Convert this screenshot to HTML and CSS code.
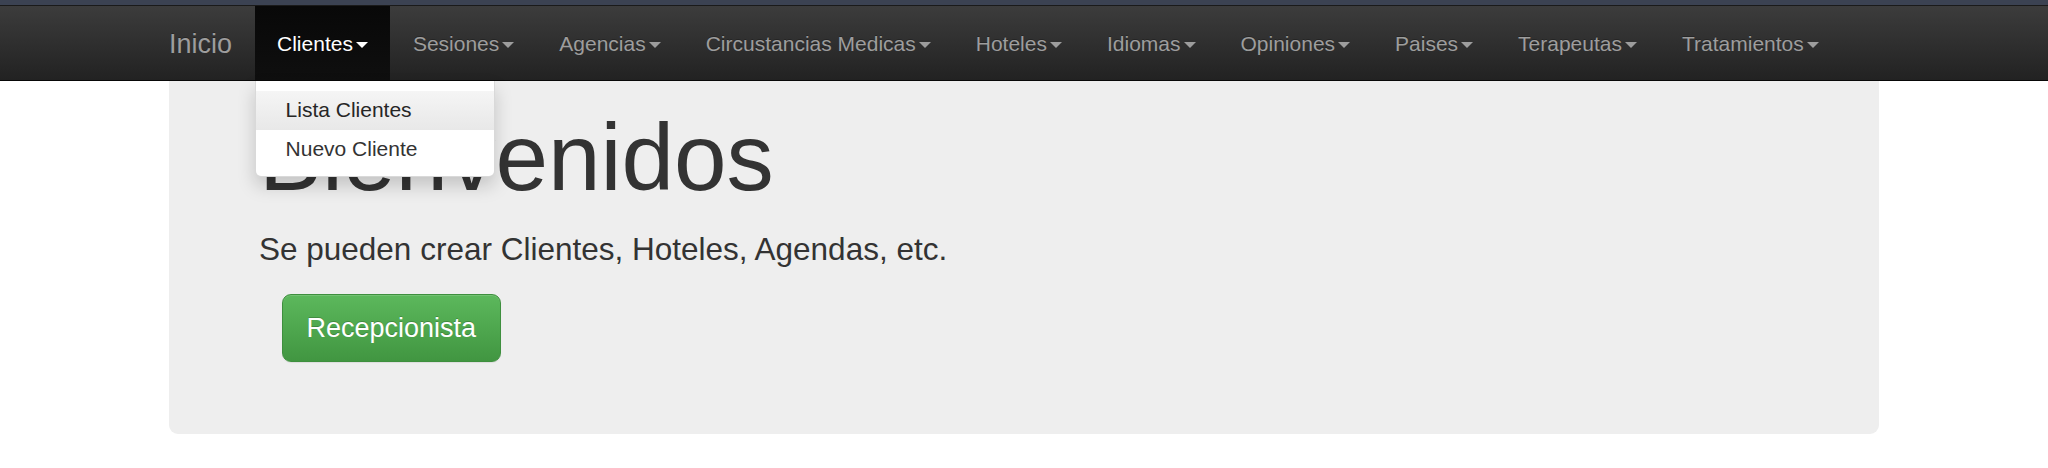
FILE: index.html
```html
<!DOCTYPE html>
<html lang="es">
<head>
<meta charset="utf-8">
<title>Inicio</title>
<link rel="stylesheet" href="styles.css">
</head>
<body>
<div class="topstrip"></div>
<nav class="navbar">
  <div class="nav-container">
    <a class="brand" href="#">Inicio</a>
    <ul class="nav">
      <li class="nav-item active">
        <a href="#">Clientes<span class="caret"></span></a>
        <ul class="dropdown">
          <li class="dd-item hover"><a href="#">Lista Clientes</a></li>
          <li class="dd-item"><a href="#">Nuevo Cliente</a></li>
        </ul>
      </li>
      <li class="nav-item"><a href="#">Sesiones<span class="caret"></span></a></li>
      <li class="nav-item"><a href="#">Agencias<span class="caret"></span></a></li>
      <li class="nav-item"><a href="#">Circustancias Medicas<span class="caret"></span></a></li>
      <li class="nav-item"><a href="#">Hoteles<span class="caret"></span></a></li>
      <li class="nav-item"><a href="#">Idiomas<span class="caret"></span></a></li>
      <li class="nav-item"><a href="#">Opiniones<span class="caret"></span></a></li>
      <li class="nav-item"><a href="#">Paises<span class="caret"></span></a></li>
      <li class="nav-item"><a href="#">Terapeutas<span class="caret"></span></a></li>
      <li class="nav-item"><a href="#">Tratamientos<span class="caret"></span></a></li>
    </ul>
  </div>
</nav>
<main class="container">
  <section class="jumbotron">
    <h1 class="title">Bienvenidos</h1>
    <p class="lead">Se pueden crear Clientes, Hoteles, Agendas, etc.</p>
    <a class="btn-success" href="#">Recepcionista</a>
  </section>
</main>
</body>
</html>
```
FILE: styles.css
```css
* { box-sizing: border-box; }
html, body {
  margin: 0;
  padding: 0;
  background: #fff;
  font-family: "Liberation Sans", Arial, sans-serif;
  color: #333;
}
a { text-decoration: none; }

.topstrip {
  height: 5px;
  background: #3b4252;
}

.navbar {
  height: 76px;
  border-top: 1px solid #1a1a1a;
  border-bottom: 1px solid #080808;
  background: linear-gradient(to bottom, #3c3c3c 0, #222 100%);
}
.nav-container {
  width: 1755px;
  margin: 0 auto;
  padding: 0 22.5px;
  display: flex;
  height: 74px;
}
.brand {
  margin-left: -22.5px;
  padding: 2px 22.5px 0;
  font-size: 27px;
  line-height: 72px;
  color: #9d9d9d;
  text-shadow: 0 -1px 0 rgba(0,0,0,.25);
}
.nav {
  list-style: none;
  margin: 0;
  padding: 0;
  display: flex;
}
.nav-item {
  position: relative;
}
.nav-item > a {
  display: block;
  height: 74px;
  padding: 2px 22.5px 0;
  font-size: 21px;
  line-height: 72px;
  color: #9d9d9d;
  text-shadow: 0 -1px 0 rgba(0,0,0,.25);
}
.nav-item.active > a {
  color: #fff;
  background: linear-gradient(to bottom, #080808 0, #0f0f0f 100%);
}
.caret {
  display: inline-block;
  width: 0;
  height: 0;
  margin-left: 3px;
  vertical-align: middle;
  border-top: 6px solid;
  border-left: 6px solid transparent;
  border-right: 6px solid transparent;
}

.dropdown {
  position: absolute;
  top: 75px;
  left: 0;
  z-index: 10;
  width: 240px;
  list-style: none;
  margin: 0;
  padding: 9.5px 0 7px;
  background: #fff;
  border: 1px solid rgba(0,0,0,.15);
  border-top: 0;
  border-radius: 0 0 6px 6px;
  box-shadow: 0 9px 18px rgba(0,0,0,.175);
}
.dd-item > a {
  display: block;
  padding: 4.5px 30px;
  font-size: 21px;
  line-height: 30px;
  color: #333;
}
.dd-item.hover > a {
  color: #262626;
  background: linear-gradient(to bottom, #f5f5f5 0, #e8e8e8 100%);
}

.container {
  width: 1710px;
  margin: 0 auto;
}
.jumbotron {
  background: #eee;
  border-radius: 0 0 9px 9px;
  padding: 25px 90px 72px;
}
.title {
  margin: 0 0 17.5px;
  font-size: 94.5px;
  line-height: 1.1;
  font-weight: 500;
  color: #333;
}
.lead {
  margin: 0 0 21.5px;
  font-size: 31.5px;
  line-height: 45px;
  font-weight: 200;
}
.btn-success {
  display: inline-block;
  margin-left: 22.5px;
  padding: 15px 24px;
  font-size: 27px;
  line-height: 36px;
  color: #fff;
  background: linear-gradient(to bottom, #5cb85c 0, #419641 100%);
  border: 1px solid #3e8f3e;
  border-radius: 9px;
  text-shadow: 0 -1px 0 rgba(0,0,0,.2);
  box-shadow: inset 0 1px 0 rgba(255,255,255,.15), 0 1px 1px rgba(0,0,0,.075);
}
```
